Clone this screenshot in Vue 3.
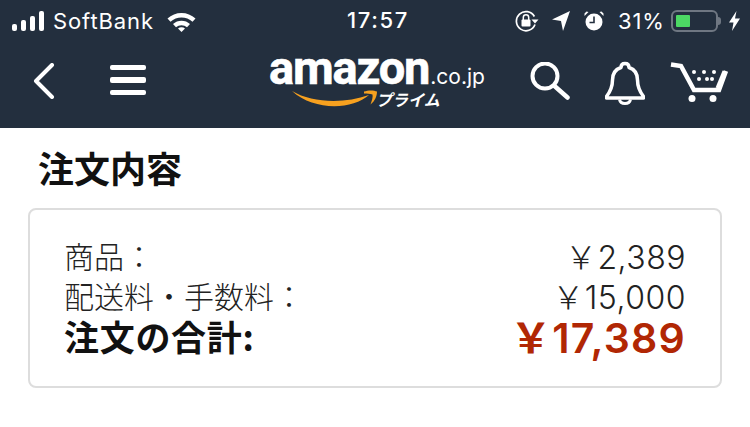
<template>
  <div class="page">
    <header class="head">
      <div class="status">
        <div class="status-left">
          <svg class="signal" width="32" height="20" viewBox="0 0 32 20">
            <rect x="0" y="13" width="5" height="7" rx="2" />
            <rect x="9" y="9" width="5" height="11" rx="2" />
            <rect x="18" y="5" width="5" height="15" rx="2" />
            <rect x="27" y="0" width="5" height="20" rx="2" />
          </svg>
          <span class="carrier">SoftBank</span>
          <svg class="wifi" width="29" height="21" viewBox="0 0 29 21">
            <path d="M0.5 7.5C8 0 21 0 28.5 7.5L25.5 10.8C19.5 5 9.5 5 3.5 10.8Z" />
            <path d="M6 13C10.5 8.5 18.5 8.5 23 13L20 16.2C17 13.5 12 13.5 9 16.2Z" />
            <path d="M11 17.5C13 15.8 16 15.8 18 17.5L14.5 21Z" />
          </svg>
        </div>
        <span class="time">17:57</span>
        <div class="status-right">
          <svg class="lock" width="24" height="22" viewBox="0 0 24 22">
            <path d="M20 14.5A9.6 9.6 0 1 1 19.4 6.5" fill="none" stroke="#fff" stroke-width="1.7" />
            <path d="M16.5 9.5H23.5L20 13.5Z" />
            <rect x="6.5" y="9.5" width="9" height="7" rx="1" />
            <path d="M8.3 10V7.5a2.7 2.7 0 0 1 5.4 0V10" fill="none" stroke="#fff" stroke-width="1.5" />
          </svg>
          <svg class="arrow-loc" width="18" height="20" viewBox="0 0 18 20">
            <path d="M18 0L0 8.5L9 10L11 20Z" />
          </svg>
          <svg class="alarm" width="20" height="20" viewBox="0 0 20 20">
            <circle cx="10" cy="11" r="8.5" />
            <path d="M10 5.5V11.5H5.5" fill="none" stroke="#232f3e" stroke-width="1.6" />
            <path d="M0.5 5L4.5 1L2.5 0.5L0.5 2.5ZM19.5 5L15.5 1L17.5 0.5L19.5 2.5Z" />
          </svg>
          <span class="percent">31%</span>
          <div class="battery">
            <div class="battery-fill"></div>
          </div>
          <div class="battery-tip"></div>
          <svg class="bolt" width="11" height="20" viewBox="0 0 11 20">
            <path d="M7.5 0L0 11.5H4.5L3 20L11 7.5H6Z" />
          </svg>
        </div>
      </div>
      <nav class="nav">
        <svg class="back" width="22" height="36" viewBox="0 0 22 36">
          <path d="M19 2L3 18L19 34" fill="none" stroke="#fff" stroke-width="4" stroke-linecap="round" stroke-linejoin="round" />
        </svg>
        <div class="burger"><i></i><i></i><i></i></div>
        <div class="logo">
          <span class="logo-word">amazon</span><span class="logo-tld">.co.jp</span>
          <svg class="smile" width="90" height="24" viewBox="0 0 90 24">
            <path d="M0 3C20 15 52 16 77 7C60 22 22 23 0 3Z" fill="#f7a11f" />
            <path d="M72 3.500C76 2 82 2 85 3.500C85 8 83 13 78.500 16.500C80 12.500 81 9 80.500 6.500C78 5.500 75 5.500 72 5.500Z" fill="#f7a11f" />
          </svg>
          <span class="logo-prime">プライム</span>
        </div>
        <svg class="search" width="40" height="38" viewBox="0 0 40 38">
          <circle cx="15" cy="14" r="12.500" fill="none" stroke="#fff" stroke-width="4" />
          <path d="M24.500 24L37.500 35.500" fill="none" stroke="#fff" stroke-width="4.500" stroke-linecap="round" />
        </svg>
        <svg class="bell" width="40" height="44" viewBox="0 0 40 44">
          <path d="M20 2.500C23 2.500 24 4.500 24 6.500C30 8.500 32.500 13 32.500 19C32.500 27 35 31 38.500 35.500V37H1.500V35.500C5 31 7.500 27 7.500 19C7.500 13 10 8.500 16 6.500C16 4.500 17 2.500 20 2.500Z" fill="none" stroke="#fff" stroke-width="3.500" stroke-linejoin="round" />
          <path d="M14.500 38.500C15 41 17 42.500 20 42.500C23 42.500 25 41 25.500 38.500" fill="none" stroke="#fff" stroke-width="3" />
        </svg>
        <svg class="cart" width="58" height="42" viewBox="0 0 58 42">
          <path d="M1 2.500L11 4L24 28H49L56 9" fill="none" stroke="#fff" stroke-width="4.500" />
          <path d="M47 26L54 9" fill="none" stroke="#fff" stroke-width="3" />
          <circle cx="22" cy="36.500" r="3.500" />
          <circle cx="43" cy="36.500" r="3.500" />
          <circle cx="24" cy="10" r="2" />
          <circle cx="34" cy="10" r="2" />
          <circle cx="44" cy="10" r="2" />
          <circle cx="29" cy="17" r="2" />
          <circle cx="37" cy="17" r="2" />
          <circle cx="42" cy="17" r="2" />
        </svg>
      </nav>
    </header>
    <main class="content">
      <h1 class="title">注文内容</h1>
      <section class="card">
        <div class="row">
          <span>商品：</span>
          <span class="amount">￥2,389</span>
        </div>
        <div class="row">
          <span>配送料・手数料：</span>
          <span class="amount">￥15,000</span>
        </div>
        <div class="row total">
          <span>注文の合計:</span>
          <span class="amount">￥17,389</span>
        </div>
      </section>
    </main>
  </div>
</template>

<script setup>
</script>

<style>
body {
  background: #fff;
}
</style>

<style scoped>
.page {
  width: 750px;
  height: 427px;
  overflow: hidden;
  font-family: "Noto Sans CJK JP", sans-serif;
  color: #111;
}
.head {
  height: 128px;
  background: #232f3e;
  color: #fff;
  fill: #fff;
}
.status {
  height: 42px;
  position: relative;
  display: flex;
  justify-content: space-between;
  align-items: center;
  padding: 0 10px 0 12px;
  font-family: Inter, sans-serif;
  font-size: 22px;
}
.status-left,
.status-right {
  display: flex;
  align-items: center;
}
.carrier {
  margin-left: 9px;
  width: 105px;
  letter-spacing: 0.900px;
}
.wifi {
  margin-left: 9px;
}
.time {
  position: absolute;
  left: 347px;
  top: 7px;
  font-weight: 500;
  font-size: 22px;
  letter-spacing: 1.600px;
}
.arrow-loc {
  margin-left: 13px;
}
.alarm {
  margin-left: 14px;
}
.percent {
  margin-left: 14px;
  width: 48px;
  letter-spacing: 0.800px;
}
.battery {
  margin-left: 5px;
  width: 47px;
  height: 22px;
  padding: 3px;
  box-sizing: border-box;
  border: 2px solid #6f7782;
  border-radius: 6px;
}
.battery-fill {
  width: 14px;
  height: 100%;
  background: #4cd964;
  border-radius: 1px;
}
.battery-tip {
  width: 3px;
  height: 8px;
  background: #6f7782;
  border-radius: 0 3px 3px 0;
}
.bolt {
  margin-left: 8px;
}
.nav {
  height: 86px;
  display: flex;
  align-items: center;
  padding-left: 33px;
}
.back {
  margin-top: -8px;
}
.burger {
  margin-left: 55px;
  margin-top: -10px;
  width: 36px;
  display: flex;
  flex-direction: column;
  gap: 7px;
}
.burger i {
  display: block;
  height: 5.500px;
  background: #fff;
  border-radius: 2px;
}
.logo {
  position: relative;
  margin-left: 123px;
  width: 217px;
  height: 58px;
  margin-top: -17px;
  white-space: nowrap;
}
.logo-word {
  font-family: Roboto, sans-serif;
  font-weight: 700;
  font-size: 47px;
  line-height: 40px;
  letter-spacing: -1.200px;
  -webkit-text-stroke: 0.600px #fff;
}
.logo-tld {
  font-family: Inter, sans-serif;
  font-size: 21px;
  margin-left: 1px;
}
.smile {
  position: absolute;
  left: 23px;
  top: 40px;
}
.logo-prime {
  position: absolute;
  left: 107px;
  top: 39px;
  font-weight: 700;
  font-size: 16px;
  line-height: 24px;
  font-style: italic;
}
.search {
  margin-left: 44px;
  margin-top: -8px;
}
.bell {
  margin-left: 35px;
  margin-top: -4px;
}
.cart {
  margin-left: 25px;
  margin-top: -4px;
}
.content {
  padding: 0 28px;
}
.title {
  margin: 0;
  padding: 14px 0 0 10px;
  height: 80px;
  box-sizing: border-box;
  font-size: 36px;
  line-height: 50px;
  font-weight: 700;
}
.card {
  width: 694px;
  height: 180px;
  box-sizing: border-box;
  border: 2px solid #ddd;
  border-radius: 8px;
  padding: 25px 34px 0;
}
.row {
  display: flex;
  justify-content: space-between;
  align-items: center;
  height: 40px;
  font-size: 30px;
  font-weight: 300;
  color: #222;
}
.amount {
  font-family: Inter, "Noto Sans CJK JP", sans-serif;
  font-size: 32px;
  font-weight: 300;
  letter-spacing: 0.500px;
}
.total {
  font-size: 35px;
  font-weight: 700;
  letter-spacing: 0.700px;
  color: #111;
}
.total .amount {
  font-size: 41px;
  font-weight: 600;
  letter-spacing: 1.200px;
  color: #b12704;
}
</style>
